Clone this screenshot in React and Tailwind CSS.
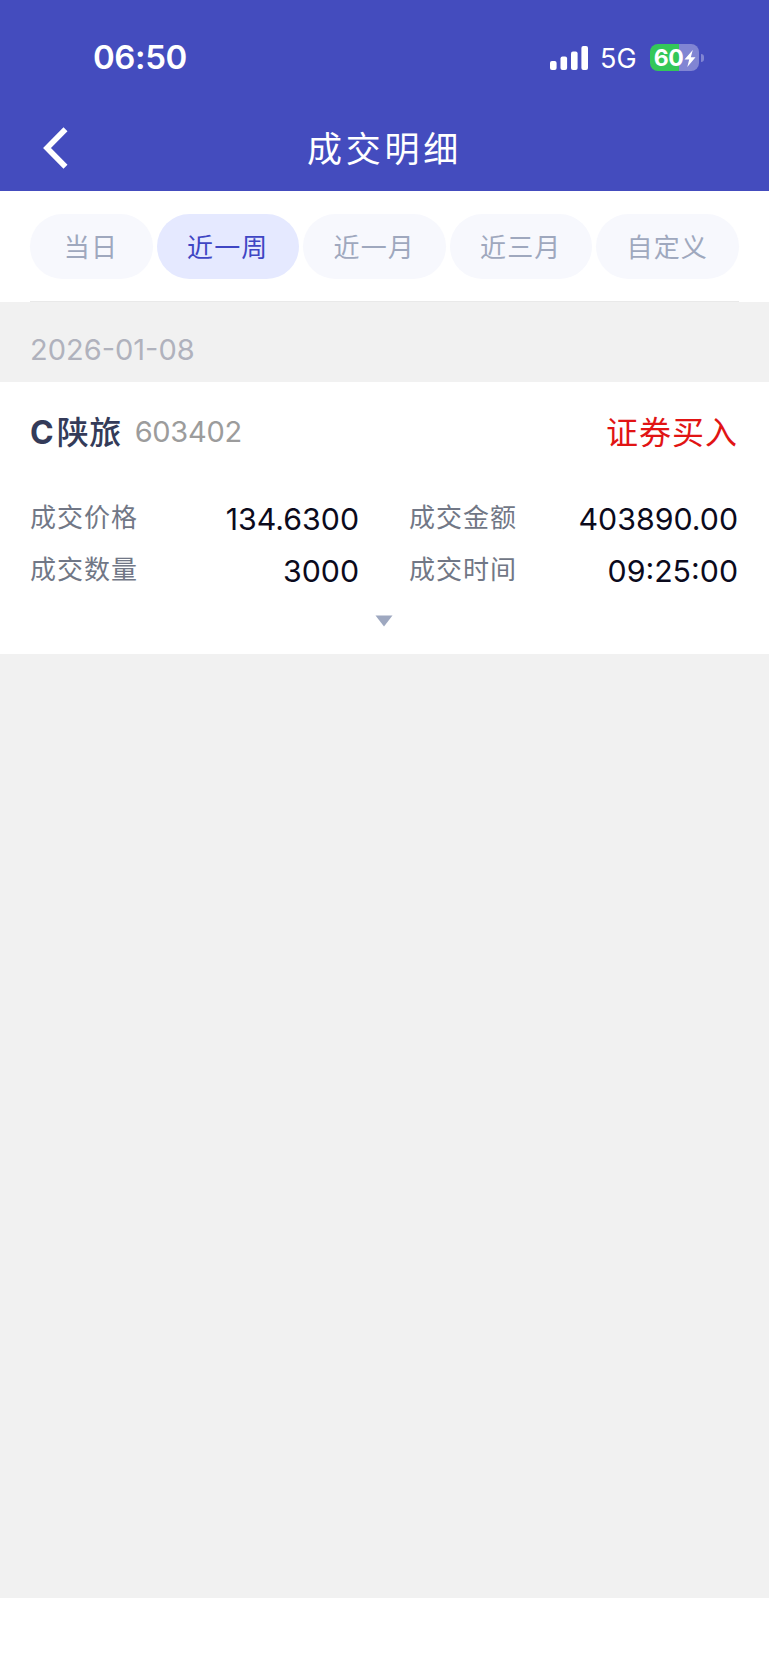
const tabs = [
  { label: '当日', width: 'w-[123px]' },
  { label: '近一周', width: 'w-[142.500px]', active: true },
  { label: '近一月', width: 'w-[142.500px]' },
  { label: '近三月', width: 'w-[142.500px]' },
  { label: '自定义', width: 'w-[142.500px]' },
];

const fields = [
  ['成交价格', '134.6300'],
  ['成交金额', '403890.00'],
  ['成交数量', '3000'],
  ['成交时间', '09:25:00'],
];

function StatusBar() {
  return (
    <div className="flex h-[106px] items-center justify-between pt-[9px] pl-[93px] pr-[65px]">
      <span className="text-[33px] leading-none font-semibold tracking-[-0.400px]">06:50</span>
      <div className="flex items-center">
        <svg className="h-[24px] w-[38px]" viewBox="0 0 38 24" fill="currentColor">
          <rect x="0" y="15" width="6.6" height="9" rx="2" />
          <rect x="10.5" y="10.5" width="6.6" height="13.5" rx="2" />
          <rect x="21" y="5.5" width="6.6" height="18.5" rx="2" />
          <rect x="31.4" y="0" width="6.6" height="24" rx="2" />
        </svg>
        <span className="ml-[12px] w-[36px] pt-[2px] text-[27px] leading-none whitespace-nowrap">5G</span>
        <div className="ml-[14px] flex items-center gap-[2px]">
          <div className="flex h-[27px] w-[49px] items-center justify-center gap-[1px] rounded-[8px] bg-[linear-gradient(90deg,#34c759_60%,#8185d3_60%)] pl-[1px]">
            <span className="pt-[1px] text-[23px] leading-none font-bold tracking-[-0.500px]">60</span>
            <svg className="mt-[1px] h-[17px] w-[12px]" viewBox="0 0 11 17" fill="currentColor">
              <path d="M8.3 0 0 9.6h4.7L2.800 17 11 7.200H6.300z" />
            </svg>
          </div>
          <div className="h-[8px] w-[3px] rounded-r-full bg-[#8185d3]" />
        </div>
      </div>
    </div>
  );
}

export default function App() {
  return (
    <div className="flex h-[1665px] w-[769px] flex-col bg-[#f1f1f1] font-['Inter','Noto_Sans_CJK_SC',sans-serif]">
      <header className="h-[191px] shrink-0 bg-[#444cbe] text-white">
        <StatusBar />
        <div className="grid h-[84px] grid-cols-[1fr_auto_1fr] items-center px-[43px]">
          <svg className="h-[42px] w-[25px]" viewBox="0 0 25 42" fill="none" stroke="currentColor" strokeWidth="5.6">
            <path d="M22.5 2.2 4 21l18.500 18.800" />
          </svg>
          <h1 className="pt-[2px] text-[35px] leading-none tracking-[3.800px]">成交明细</h1>
          <span />
        </div>
      </header>

      <nav className="h-[111px] shrink-0 bg-white pr-[30.500px] pl-[29.500px] pt-[23px]">
        <div className="flex h-[88px] justify-between border-b border-[#e9e9e9]">
          {tabs.map((tab) => (
            <button
              key={tab.label}
              className={`flex h-[65px] items-center justify-center rounded-full pt-[2px] text-[26px] leading-none tracking-[1.200px] ${tab.width} ${
                tab.active ? 'bg-[#e5e9ff] text-[#3f46c4]' : 'bg-[#f7f8fd] text-[#9fa8be]'
              }`}
            >
              {tab.label}
            </button>
          ))}
        </div>
      </nav>

      <div className="flex h-[80px] shrink-0 items-center px-[30px] pt-[15px] text-[29px] leading-none text-[#b0b2bd]">
        2026-01-08
      </div>

      <section className="flex h-[272px] shrink-0 flex-col bg-white pr-[31px] pl-[30px]">
        <div className="flex h-[100px] items-center justify-between leading-none">
          <div className="flex items-center gap-[13px]">
            <div className="flex items-center gap-[3px] pt-[2px] text-[32px] text-[#343b59]">
              <span className="font-bold">C</span>
              <span className="font-medium tracking-[0.500px]">陕旅</span>
            </div>
            <span className="pb-[1px] text-[29px] tracking-[-0.300px] text-[#9c9c9c]">603402</span>
          </div>
          <span className="pt-[2px] text-[32px] tracking-[1px] text-[#e11414]">证券买入</span>
        </div>
        <div className="grid grid-cols-2 gap-x-[50px] pt-[11px]">
          {fields.map(([label, value]) => (
            <div key={label} className="flex h-[52px] items-center justify-between leading-none">
              <span className="pb-[2px] text-[26px] tracking-[1px] text-[#717786]">{label}</span>
              <span className="pt-[1px] text-[30.300px] text-[#0b0a1c]">{value}</span>
            </div>
          ))}
        </div>
        <svg className="mt-[18px] h-[12px] w-[18px] self-center" viewBox="0 0 18 12" fill="#9ea8c0">
          <path d="M0.500 0.500h17L9 11.500z" />
        </svg>
      </section>

      <div className="flex-1" />
      <footer className="h-[67px] shrink-0 bg-white" />
    </div>
  );
}
